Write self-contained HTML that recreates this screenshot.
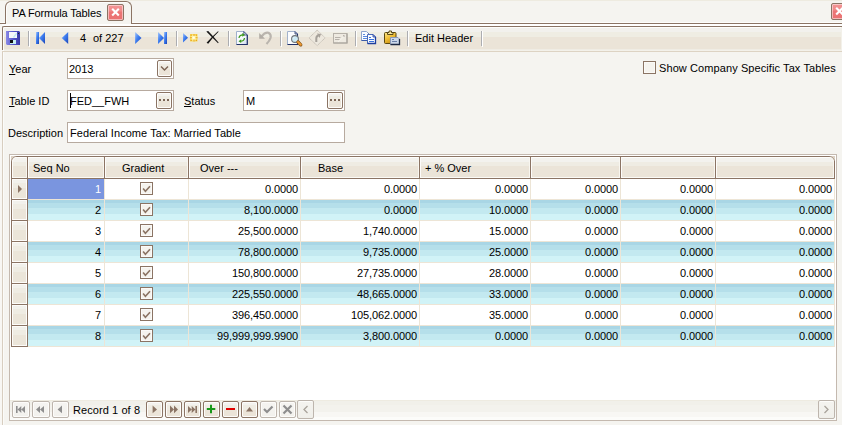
<!DOCTYPE html>
<html><head><meta charset="utf-8">
<style>
*{margin:0;padding:0;box-sizing:border-box}
html,body{width:842px;height:425px;overflow:hidden;background:#f5f4f0;font-family:"Liberation Sans",sans-serif;font-size:11px;color:#000}
.a{position:absolute}
.t{position:absolute;white-space:nowrap;line-height:13px}
svg.a{overflow:visible}
u{text-decoration:underline;text-underline-offset:1px}
</style></head><body>
<div class="a" style="left:0px;top:0px;width:842px;height:1px;background:#eeebe0"></div>
<div class="a" style="left:0px;top:22px;width:842px;height:1px;background:#fdfdfb"></div>
<div class="a" style="left:0px;top:23px;width:842px;height:1px;background:#8b7464"></div>
<div class="a" style="left:0px;top:24px;width:842px;height:2px;background:#fff"></div>
<div class="a" style="left:5px;top:1px;width:127px;height:23px;border:1px solid #8b7464;border-bottom:none;border-radius:6px 6px 0 0;background:#f5f4f0;box-shadow:inset 1px 1px 0 #fdfdfb"></div>
<div class="a" style="left:6px;top:22px;width:125px;height:2px;background:#f5f4f0"></div>
<div class="t" style="left:12px;top:7px;letter-spacing:-0.12px">PA Formula Tables</div>
<div class="a" style="left:107px;top:4px;width:17px;height:17px;border:1px solid #8b7464;border-radius:2px;background:linear-gradient(#f39494 0,#f08a8a 6px,#ec7676 7px,#eb7272);box-shadow:inset 0 0 0 1px rgba(255,240,240,0.55)"></div>
<svg class="a" style="left:107px;top:4px" width="17" height="17" viewBox="0 0 17 17"><path d="M5.2 4.8 L11.8 11.4 M11.8 4.8 L5.2 11.4" stroke="#fff" stroke-width="2.1"/></svg>
<div class="a" style="left:831px;top:3px;width:17px;height:17px;border:1px solid #8b7464;border-radius:2px;background:linear-gradient(#f39494 0,#f08a8a 6px,#ec7676 7px,#eb7272);box-shadow:inset 0 0 0 1px rgba(255,240,240,0.55)"></div>
<svg class="a" style="left:831px;top:3px" width="17" height="17" viewBox="0 0 17 17"><path d="M5.2 4.8 L11.8 11.4 M11.8 4.8 L5.2 11.4" stroke="#fff" stroke-width="2.1"/></svg>
<div class="a" style="left:2px;top:26px;width:840px;height:25px;border-top:1px solid #8b7464;border-left:1px solid #8b7464;border-top-left-radius:2px;background:linear-gradient(#fdfdfb 0,#fdfdfb 1px,#f2f1ed 1px,#f2f1ed 5px,#efede3 5px,#efede3 10px,#ebe4d8 10px,#ebe4d8 22px,#efece4 22px,#efece4 23px,#f3f1ea 23px);box-shadow:inset 1px 0 0 #fdfdfb"></div>
<div class="a" style="left:2px;top:50px;width:1px;height:1px;background:#f6f5f1"></div>
<div class="a" style="left:841px;top:27px;width:1px;height:24px;background:#f3f1ea"></div>
<div class="a" style="left:2px;top:51px;width:840px;height:1px;background:#ddd3c3"></div>
<div class="a" style="left:28px;top:31px;width:1px;height:15px;background:#acadb1"></div>
<div class="a" style="left:29px;top:31px;width:1px;height:16px;background:#fff"></div>
<div class="a" style="left:176px;top:31px;width:1px;height:15px;background:#acadb1"></div>
<div class="a" style="left:177px;top:31px;width:1px;height:16px;background:#fff"></div>
<div class="a" style="left:228px;top:31px;width:1px;height:15px;background:#acadb1"></div>
<div class="a" style="left:229px;top:31px;width:1px;height:16px;background:#fff"></div>
<div class="a" style="left:280px;top:31px;width:1px;height:15px;background:#acadb1"></div>
<div class="a" style="left:281px;top:31px;width:1px;height:16px;background:#fff"></div>
<div class="a" style="left:355px;top:31px;width:1px;height:15px;background:#acadb1"></div>
<div class="a" style="left:356px;top:31px;width:1px;height:16px;background:#fff"></div>
<div class="a" style="left:407px;top:31px;width:1px;height:15px;background:#acadb1"></div>
<div class="a" style="left:408px;top:31px;width:1px;height:16px;background:#fff"></div>
<div class="a" style="left:481px;top:31px;width:1px;height:15px;background:#acadb1"></div>
<div class="a" style="left:482px;top:31px;width:1px;height:16px;background:#fff"></div>
<svg class="a" style="left:6px;top:31px" width="14" height="14" viewBox="0 0 14 14"><defs><linearGradient id="fl" x1="0" y1="0" x2="1" y2="0"><stop offset="0" stop-color="#8a8ae6"/><stop offset="0.5" stop-color="#5656cc"/><stop offset="1" stop-color="#3a3aa8"/></linearGradient></defs><path d="M0 0 H13 L14 1 V14 H1 L0 13 Z" fill="url(#fl)"/><rect x="3" y="1" width="8" height="6" fill="#f4f6fa"/><path d="M7 6 L10 2 L11 2 L11 3 L8 7 Z" fill="#bfe8f0"/><rect x="4" y="9" width="6" height="4" fill="#c8eef2"/><rect x="4" y="9" width="3" height="3" fill="#111"/><rect x="12" y="2" width="1" height="1" fill="#222"/></svg>
<svg class="a" style="left:36px;top:32px" width="10" height="12" viewBox="0 0 10 12"><defs><linearGradient id="bg1" x1="0" y1="0" x2="1" y2="1"><stop offset="0" stop-color="#a8c8fa"/><stop offset="0.45" stop-color="#3f7ff0"/><stop offset="1" stop-color="#1a44b8"/></linearGradient></defs><rect x="0" y="0" width="3" height="12" fill="url(#bg1)"/><path d="M9 0 V12 L3 6 Z" fill="url(#bg1)"/></svg>
<svg class="a" style="left:61px;top:32px" width="8" height="12" viewBox="0 0 8 12"><defs><linearGradient id="bg2" x1="0" y1="0" x2="1" y2="1"><stop offset="0" stop-color="#a8c8fa"/><stop offset="0.45" stop-color="#3f7ff0"/><stop offset="1" stop-color="#1a44b8"/></linearGradient></defs><path d="M7.2 0 V12 L0.7 6 Z" fill="url(#bg2)"/></svg>
<div class="t" style="left:80px;top:32px;">4</div>
<div class="t" style="left:93px;top:32px;">of 227</div>
<svg class="a" style="left:135px;top:32px" width="7" height="12" viewBox="0 0 7 12"><defs><linearGradient id="bg3" x1="0" y1="0" x2="1" y2="1"><stop offset="0" stop-color="#a8c8fa"/><stop offset="0.45" stop-color="#3f7ff0"/><stop offset="1" stop-color="#1a44b8"/></linearGradient></defs><path d="M0.1 0 V12 L6.5 6 Z" fill="url(#bg3)"/></svg>
<svg class="a" style="left:158px;top:32px" width="10" height="12" viewBox="0 0 10 12"><defs><linearGradient id="bg4" x1="0" y1="0" x2="1" y2="1"><stop offset="0" stop-color="#a8c8fa"/><stop offset="0.45" stop-color="#3f7ff0"/><stop offset="1" stop-color="#1a44b8"/></linearGradient></defs><path d="M0 0 V12 L6 6 Z" fill="url(#bg4)"/><rect x="6" y="0" width="3" height="12" fill="url(#bg4)"/></svg>
<svg class="a" style="left:183px;top:33px" width="15" height="10" viewBox="0 0 15 10"><defs><linearGradient id="bg5" x1="0" y1="0" x2="1" y2="1"><stop offset="0" stop-color="#a8c8fa"/><stop offset="0.45" stop-color="#3f7ff0"/><stop offset="1" stop-color="#1a44b8"/></linearGradient></defs><path d="M0 0 V9.5 L5 4.75 Z" fill="url(#bg5)"/><defs><radialGradient id="sb"><stop offset="0" stop-color="#fff"/><stop offset="0.45" stop-color="#fdf6b0"/><stop offset="1" stop-color="#f8dc5a"/></radialGradient></defs><rect x="7" y="1" width="7.5" height="7.5" fill="url(#sb)"/><path d="M10.5 1h1v2h-1zM10.5 6.5h1v2h-1zM7 4.3h2v1h-2zM12.5 4.3h2v1h-2zM7.5 1.5h1.3v1.3h-1.3zM12.7 1.5h1.3v1.3h-1.3zM7.5 6.7h1.3v1.3h-1.3zM12.7 6.7h1.3v1.3h-1.3z" fill="#eaa21e"/></svg>
<svg class="a" style="left:206px;top:31px" width="13" height="13" viewBox="0 0 13 13"><path d="M0.3 0.6 L2.2 0 Q7 5 12.6 11.6 L12 12.3 Q6 6.5 0.3 0.6 Z" fill="#151515"/><path d="M12.6 0.8 L12 0.2 Q6 5.5 0.6 11.8 L2.2 12.8 Q7 6 12.6 0.8 Z" fill="#151515"/></svg>
<svg class="a" style="left:236px;top:31px" width="12" height="14" viewBox="0 0 12 14"><defs><linearGradient id="rd" x1="0" y1="0" x2="1" y2="1"><stop offset="0" stop-color="#ffffff"/><stop offset="0.6" stop-color="#f2f6fc"/><stop offset="1" stop-color="#c9d6ea"/></linearGradient></defs><path d="M0.5 0.5 H7.8 L11.3 4 V13.5 H0.5 Z" fill="url(#rd)" stroke="#9fb0cc"/><path d="M11.3 4 V13.5 H0.5" fill="none" stroke="#22326a" stroke-width="1.2"/><path d="M7.8 0.5 L11.3 4 H7.8 Z" fill="#dfe6f2" stroke="#2a3a70" stroke-width="0.8"/><path d="M3 7 Q3.2 4 7 3.8" stroke="#3d9a1e" stroke-width="1.25" fill="none"/><path d="M6.3 2 L9 3.9 L6.3 5.8 Z" fill="#3d9a1e"/><path d="M8.5 7 Q8.3 10 4.5 10.2" stroke="#3d9a1e" stroke-width="1.25" fill="none"/><path d="M5.2 8.3 L2.5 10.2 L5.2 12.1 Z" fill="#3d9a1e"/></svg>
<svg class="a" style="left:259px;top:31px" width="14" height="14" viewBox="0 0 14 14"><path d="M2.5 5.5 Q6 1 9.5 1.8 Q12.5 3.5 11.5 7 Q10.5 10 7.5 13" stroke="#bab5ae" stroke-width="2.2" fill="none"/><path d="M0.2 2 V7.8 H6 Z" fill="#b2ada6"/></svg>
<svg class="a" style="left:287px;top:31px" width="16" height="15" viewBox="0 0 16 15"><defs><linearGradient id="mg" x1="0" y1="0" x2="1" y2="1"><stop offset="0" stop-color="#f4fbff"/><stop offset="0.5" stop-color="#c8e8f4"/><stop offset="1" stop-color="#eef8fc"/></linearGradient></defs><path d="M0.5 0.5 H8 L10.5 3 V13.5 H0.5 Z" fill="#fbfcfe" stroke="#a2b2cc"/><path d="M10.5 3 V13.5 H0.5" fill="none" stroke="#22326a" stroke-width="1.1"/><path d="M8 0.5 L10.5 3 H8 Z" fill="#dfe6f2" stroke="#2a3a70" stroke-width="0.8"/><circle cx="8" cy="8" r="3.4" fill="url(#mg)" stroke="#6e747a" stroke-width="1.1"/><path d="M11 11 L13.8 13.8" stroke="#7a4a10" stroke-width="3.2" stroke-linecap="round"/><path d="M11 11 L13.8 13.8" stroke="#ee9a34" stroke-width="2" stroke-linecap="round"/></svg>
<svg class="a" style="left:308px;top:29px" width="19" height="19" viewBox="0 0 19 19"><path d="M9.2 1.1 L17.1 8.9 L9.2 16.6 L1 8.9 Z" fill="#ede8de" stroke="#c2bcb3" stroke-dasharray="1.2 0.6"/><path d="M8.3 13 V9.5 Q8.3 7 10.5 6.5" stroke="#a6a19a" stroke-width="2" fill="none"/><path d="M9 4.5 L13 5 L11.5 9 Z" fill="#a6a19a"/></svg>
<svg class="a" style="left:333px;top:33px" width="15" height="11" viewBox="0 0 15 11"><rect x="0.5" y="0.5" width="13.5" height="9.5" fill="#eeeae1" stroke="#b6b1a9"/><path d="M14 0.5 V10 H0.5" fill="none" stroke="#a8a39c" stroke-width="1.2"/><path d="M2 4.5 H7.5 M2 6.5 H6.5" stroke="#b0aca5" stroke-width="0.9"/><rect x="10" y="2" width="2" height="2" fill="#b8b2aa"/><path d="M5 9 L12 2.5" stroke="#f8f6f0" stroke-width="0.8"/></svg>
<svg class="a" style="left:361px;top:31px" width="16" height="14" viewBox="0 0 16 14"><path d="M0.5 0.5 H5.5 L7.5 2.5 V9.5 H0.5 Z" fill="#f8fbff" stroke="#8ea4cc"/><path d="M7.5 2.5 V9.5 H0.5" fill="none" stroke="#3a5aa8"/><path d="M2 3.5 H4 M2 5.5 H6 M2 7.5 H6" stroke="#5a8ae0" stroke-width="1"/><path d="M6.5 3.5 H12 L14.5 6 V12.5 H6.5 Z" fill="#f8fbff" stroke="#4a6ab8"/><path d="M14.5 6 V12.5 H6.5" fill="none" stroke="#1e3e9e" stroke-width="1.3"/><path d="M12 3.5 L14.5 6 H12 Z" fill="#c0d0ee" stroke="#1e3e9e" stroke-width="0.8"/><path d="M8 6.5 H10 M8 8.5 H13 M8 10.5 H13" stroke="#3a72dc" stroke-width="1"/></svg>
<svg class="a" style="left:384px;top:30px" width="17" height="16" viewBox="0 0 17 16"><defs><linearGradient id="gd" x1="0" y1="0" x2="0.6" y2="1"><stop offset="0" stop-color="#fbe68c"/><stop offset="0.5" stop-color="#f0c03a"/><stop offset="1" stop-color="#c88e10"/></linearGradient></defs><rect x="0.5" y="2.5" width="11.5" height="11" rx="1" fill="url(#gd)" stroke="#5a4812"/><path d="M3.5 4.5 V2.5 H5 V1 H7.5 V2.5 H9 V4.5 Z" fill="#f4e49a" stroke="#4a3a10" stroke-width="0.9"/><path d="M6.5 7.5 H14 L15.5 9 V14.5 H6.5 Z" fill="#ccd8ea" stroke="#8898b8"/><path d="M15.5 9 V14.5 H6.5" fill="none" stroke="#1e2a44" stroke-width="1.3"/><path d="M8 9.5 H10 M8 11.5 H13" stroke="#6a80a8" stroke-width="1"/></svg>
<div class="t" style="left:415px;top:32px;">Edit Header</div>
<div class="a" style="left:0px;top:24px;width:2px;height:401px;background:#f8f7f4"></div>
<div class="a" style="left:2px;top:52px;width:1px;height:373px;background:#d8cec0"></div>
<div class="a" style="left:3px;top:52px;width:1px;height:373px;background:#fbfbf9"></div>
<div class="t" style="left:9px;top:63px;"><u>Y</u>ear</div>
<div class="a" style="left:67px;top:58px;width:107px;height:21px;border:1px solid #b7aa9f;background:#fff"></div>
<div class="t" style="left:69px;top:63px;">2013</div>
<div class="a" style="left:157px;top:60px;width:15px;height:17px;border:1px solid #8b7464;border-radius:2px;background:linear-gradient(#f3f2ee 0,#f3f2ee 3px,#efece3 3px,#efece3 8px,#ebe4d8 8px);box-shadow:inset 0 0 0 1px #fdfcfa"></div>
<svg class="a" style="left:157px;top:60px" width="15" height="17" viewBox="0 0 15 17"><path d="M4 6.5 L7.5 10 L11 6.5" stroke="#7d6656" stroke-width="1.5" fill="none"/></svg>
<div class="t" style="left:9px;top:95px;"><u>T</u>able ID</div>
<div class="a" style="left:67px;top:90px;width:107px;height:21px;border:1px solid #b7aa9f;background:#fff"></div>
<div class="t" style="left:70px;top:95px;">FED__FWH</div>
<div class="a" style="left:70px;top:93px;width:1px;height:15px;background:#000"></div>
<div class="a" style="left:156px;top:92px;width:16px;height:17px;border:1px solid #8b7464;border-radius:2px;background:linear-gradient(#f3f2ee 0,#f3f2ee 3px,#efece3 3px,#efece3 8px,#ebe4d8 8px);box-shadow:inset 0 0 0 1px #fdfcfa"></div>
<svg class="a" style="left:156px;top:92px" width="16" height="17" viewBox="0 0 16 17"><rect x="3" y="7" width="2" height="2" fill="#7d6656"/><rect x="7" y="7" width="2" height="2" fill="#7d6656"/><rect x="11" y="7" width="2" height="2" fill="#7d6656"/></svg>
<div class="t" style="left:184px;top:95px;"><u>S</u>tatus</div>
<div class="a" style="left:243px;top:90px;width:102px;height:21px;border:1px solid #b7aa9f;background:#fff"></div>
<div class="t" style="left:246px;top:95px;">M</div>
<div class="a" style="left:327px;top:92px;width:16px;height:17px;border:1px solid #8b7464;border-radius:2px;background:linear-gradient(#f3f2ee 0,#f3f2ee 3px,#efece3 3px,#efece3 8px,#ebe4d8 8px);box-shadow:inset 0 0 0 1px #fdfcfa"></div>
<svg class="a" style="left:327px;top:92px" width="16" height="17" viewBox="0 0 16 17"><rect x="3" y="7" width="2" height="2" fill="#7d6656"/><rect x="7" y="7" width="2" height="2" fill="#7d6656"/><rect x="11" y="7" width="2" height="2" fill="#7d6656"/></svg>
<div class="t" style="left:8px;top:127px;">Description</div>
<div class="a" style="left:67px;top:122px;width:278px;height:21px;border:1px solid #b7aa9f;background:#fff"></div>
<div class="t" style="left:70px;top:127px;letter-spacing:0.06px">Federal Income Tax: Married Table</div>
<div class="a" style="left:643px;top:61px;width:13px;height:13px;border:1px solid #8b7464;background:#f5f3ee;box-shadow:inset 0 0 0 1px #fbfaf7"></div>
<div class="t" style="left:659px;top:62px;letter-spacing:0.09px">Show Company Specific Tax Tables</div>
<div class="a" style="left:9px;top:154px;width:828px;height:267px;border:1px solid #c4b9af;background:#fff"></div>
<div class="a" style="left:11px;top:156px;width:4px;height:4px;background:radial-gradient(circle at 6px 6px,transparent 5px,#ddd2c4 6px)"></div>
<div class="a" style="left:831px;top:156px;width:4px;height:4px;background:radial-gradient(circle at -2px 6px,transparent 5px,#ddd2c4 6px)"></div>
<div class="a" style="left:11px;top:156px;width:824px;height:23px;border:1px solid #8b7464;border-radius:6px 6px 0 0;background:#ebe5d9;overflow:hidden"></div>
<div class="a" style="left:12px;top:157px;width:15px;height:21px;background:linear-gradient(#fdfdfb 0,#fdfdfb 1px,#f3f2ee 1px,#f3f2ee 5px,#efece3 5px,#efece3 9px,#ebe4d8 9px,#ebe4d8 20px,#fbfaf6 20px);box-shadow:inset 1px 0 0 #fdfcfa,inset -1px 0 0 #f8f6f0;border-top-left-radius:5px;"></div>
<div class="a" style="left:27px;top:157px;width:1px;height:22px;background:#8b7464"></div>
<div class="a" style="left:28px;top:157px;width:76px;height:21px;background:linear-gradient(#fdfdfb 0,#fdfdfb 1px,#f3f2ee 1px,#f3f2ee 5px,#efece3 5px,#efece3 9px,#ebe4d8 9px,#ebe4d8 20px,#fbfaf6 20px);box-shadow:inset 1px 0 0 #fdfcfa,inset -1px 0 0 #f8f6f0;"></div>
<div class="a" style="left:104px;top:157px;width:1px;height:22px;background:#8b7464"></div>
<div class="a" style="left:105px;top:157px;width:83px;height:21px;background:linear-gradient(#fdfdfb 0,#fdfdfb 1px,#f3f2ee 1px,#f3f2ee 5px,#efece3 5px,#efece3 9px,#ebe4d8 9px,#ebe4d8 20px,#fbfaf6 20px);box-shadow:inset 1px 0 0 #fdfcfa,inset -1px 0 0 #f8f6f0;"></div>
<div class="a" style="left:188px;top:157px;width:1px;height:22px;background:#8b7464"></div>
<div class="a" style="left:189px;top:157px;width:111px;height:21px;background:linear-gradient(#fdfdfb 0,#fdfdfb 1px,#f3f2ee 1px,#f3f2ee 5px,#efece3 5px,#efece3 9px,#ebe4d8 9px,#ebe4d8 20px,#fbfaf6 20px);box-shadow:inset 1px 0 0 #fdfcfa,inset -1px 0 0 #f8f6f0;"></div>
<div class="a" style="left:300px;top:157px;width:1px;height:22px;background:#8b7464"></div>
<div class="a" style="left:301px;top:157px;width:118px;height:21px;background:linear-gradient(#fdfdfb 0,#fdfdfb 1px,#f3f2ee 1px,#f3f2ee 5px,#efece3 5px,#efece3 9px,#ebe4d8 9px,#ebe4d8 20px,#fbfaf6 20px);box-shadow:inset 1px 0 0 #fdfcfa,inset -1px 0 0 #f8f6f0;"></div>
<div class="a" style="left:419px;top:157px;width:1px;height:22px;background:#8b7464"></div>
<div class="a" style="left:420px;top:157px;width:110px;height:21px;background:linear-gradient(#fdfdfb 0,#fdfdfb 1px,#f3f2ee 1px,#f3f2ee 5px,#efece3 5px,#efece3 9px,#ebe4d8 9px,#ebe4d8 20px,#fbfaf6 20px);box-shadow:inset 1px 0 0 #fdfcfa,inset -1px 0 0 #f8f6f0;"></div>
<div class="a" style="left:530px;top:157px;width:1px;height:22px;background:#8b7464"></div>
<div class="a" style="left:531px;top:157px;width:89px;height:21px;background:linear-gradient(#fdfdfb 0,#fdfdfb 1px,#f3f2ee 1px,#f3f2ee 5px,#efece3 5px,#efece3 9px,#ebe4d8 9px,#ebe4d8 20px,#fbfaf6 20px);box-shadow:inset 1px 0 0 #fdfcfa,inset -1px 0 0 #f8f6f0;"></div>
<div class="a" style="left:620px;top:157px;width:1px;height:22px;background:#8b7464"></div>
<div class="a" style="left:621px;top:157px;width:94px;height:21px;background:linear-gradient(#fdfdfb 0,#fdfdfb 1px,#f3f2ee 1px,#f3f2ee 5px,#efece3 5px,#efece3 9px,#ebe4d8 9px,#ebe4d8 20px,#fbfaf6 20px);box-shadow:inset 1px 0 0 #fdfcfa,inset -1px 0 0 #f8f6f0;"></div>
<div class="a" style="left:715px;top:157px;width:1px;height:22px;background:#8b7464"></div>
<div class="a" style="left:716px;top:157px;width:118px;height:21px;background:linear-gradient(#fdfdfb 0,#fdfdfb 1px,#f3f2ee 1px,#f3f2ee 5px,#efece3 5px,#efece3 9px,#ebe4d8 9px,#ebe4d8 20px,#fbfaf6 20px);box-shadow:inset 1px 0 0 #fdfcfa,inset -1px 0 0 #f8f6f0;border-top-right-radius:5px;"></div>
<div class="t" style="left:33px;top:162px;">Seq No</div>
<div class="t" style="left:122px;top:162px;">Gradient</div>
<div class="t" style="left:200px;top:162px;">Over ---</div>
<div class="t" style="left:318px;top:162px;">Base</div>
<div class="t" style="left:425px;top:162px;">+ % Over</div>
<div class="a" style="left:11px;top:178px;width:17px;height:169px;background:#8b7464"></div>
<div class="a" style="left:28px;top:179px;width:806px;height:20px;background:#fff"></div>
<div class="a" style="left:28px;top:199px;width:806px;height:1px;background:#ede5d6"></div>
<div class="a" style="left:12px;top:179px;width:15px;height:20px;background:linear-gradient(#fdfcfa 0,#fdfcfa 1px,#f2f1ec 1px,#f2f1ec 4px,#efece3 4px,#efece3 9px,#ebe5d9 9px,#ebe5d9 19px,#fdfcfa 19px);box-shadow:inset 1px 0 0 #fdfcfa,inset -1px 0 0 #fdfcfa"></div>
<div class="a" style="left:104px;top:179px;width:1px;height:21px;background:#ede5d6"></div>
<div class="a" style="left:188px;top:179px;width:1px;height:21px;background:#ede5d6"></div>
<div class="a" style="left:300px;top:179px;width:1px;height:21px;background:#ede5d6"></div>
<div class="a" style="left:419px;top:179px;width:1px;height:21px;background:#ede5d6"></div>
<div class="a" style="left:530px;top:179px;width:1px;height:21px;background:#ede5d6"></div>
<div class="a" style="left:620px;top:179px;width:1px;height:21px;background:#ede5d6"></div>
<div class="a" style="left:715px;top:179px;width:1px;height:21px;background:#ede5d6"></div>
<div class="a" style="left:834px;top:179px;width:1px;height:21px;background:#ede5d6"></div>
<div class="a" style="left:28px;top:179px;width:76px;height:20px;background:#7a95df"></div>
<svg class="a" style="left:17px;top:185px" width="6" height="8" viewBox="0 0 6 8"><path d="M1 0 L5 4 L1 8 Z" fill="#8b7464"/></svg>
<div class="t" style="left:28px;top:183px;width:73px;text-align:right;color:#fff">1</div>
<div class="a" style="left:140px;top:182px;width:13px;height:13px;border:1px solid #8b7464;background:#f5f3ee;box-shadow:inset 0 0 0 1px #fbfaf8"></div>
<svg class="a" style="left:140px;top:182px" width="13" height="13" viewBox="0 0 13 13"><path d="M3.1 6.5 L5.4 9.2 L10 4.2" stroke="#8b7464" stroke-width="1.6" fill="none"/></svg>
<div class="t" style="left:180px;top:183px;width:118px;text-align:right;letter-spacing:-0.1px">0.0000</div>
<div class="t" style="left:299px;top:183px;width:118px;text-align:right;letter-spacing:-0.1px">0.0000</div>
<div class="t" style="left:410px;top:183px;width:118px;text-align:right;letter-spacing:-0.1px">0.0000</div>
<div class="t" style="left:500px;top:183px;width:118px;text-align:right;letter-spacing:-0.1px">0.0000</div>
<div class="t" style="left:595px;top:183px;width:118px;text-align:right;letter-spacing:-0.1px">0.0000</div>
<div class="t" style="left:714px;top:183px;width:118px;text-align:right;letter-spacing:-0.1px">0.0000</div>
<div class="a" style="left:28px;top:200px;width:806px;height:20px;background:linear-gradient(#a9d6e5 0,#a9d6e5 3px,#b5dfea 3px,#b5dfea 8px,#c3e9f0 8px,#c3e9f0 14px,#d1f3f7 14px)"></div>
<div class="a" style="left:28px;top:220px;width:806px;height:1px;background:#ede5d6"></div>
<div class="a" style="left:12px;top:200px;width:15px;height:20px;background:linear-gradient(#fdfcfa 0,#fdfcfa 1px,#f2f1ec 1px,#f2f1ec 4px,#efece3 4px,#efece3 9px,#ebe5d9 9px,#ebe5d9 19px,#fdfcfa 19px);box-shadow:inset 1px 0 0 #fdfcfa,inset -1px 0 0 #fdfcfa"></div>
<div class="a" style="left:104px;top:200px;width:1px;height:21px;background:#ede5d6"></div>
<div class="a" style="left:188px;top:200px;width:1px;height:21px;background:#ede5d6"></div>
<div class="a" style="left:300px;top:200px;width:1px;height:21px;background:#ede5d6"></div>
<div class="a" style="left:419px;top:200px;width:1px;height:21px;background:#ede5d6"></div>
<div class="a" style="left:530px;top:200px;width:1px;height:21px;background:#ede5d6"></div>
<div class="a" style="left:620px;top:200px;width:1px;height:21px;background:#ede5d6"></div>
<div class="a" style="left:715px;top:200px;width:1px;height:21px;background:#ede5d6"></div>
<div class="a" style="left:834px;top:200px;width:1px;height:21px;background:#ede5d6"></div>
<div class="t" style="left:28px;top:204px;width:73px;text-align:right;color:#000">2</div>
<div class="a" style="left:140px;top:203px;width:13px;height:13px;border:1px solid #8b7464;background:#f5f3ee;box-shadow:inset 0 0 0 1px #fbfaf8"></div>
<svg class="a" style="left:140px;top:203px" width="13" height="13" viewBox="0 0 13 13"><path d="M3.1 6.5 L5.4 9.2 L10 4.2" stroke="#8b7464" stroke-width="1.6" fill="none"/></svg>
<div class="t" style="left:180px;top:204px;width:118px;text-align:right;letter-spacing:-0.1px">8,100.0000</div>
<div class="t" style="left:299px;top:204px;width:118px;text-align:right;letter-spacing:-0.1px">0.0000</div>
<div class="t" style="left:410px;top:204px;width:118px;text-align:right;letter-spacing:-0.1px">10.0000</div>
<div class="t" style="left:500px;top:204px;width:118px;text-align:right;letter-spacing:-0.1px">0.0000</div>
<div class="t" style="left:595px;top:204px;width:118px;text-align:right;letter-spacing:-0.1px">0.0000</div>
<div class="t" style="left:714px;top:204px;width:118px;text-align:right;letter-spacing:-0.1px">0.0000</div>
<div class="a" style="left:28px;top:221px;width:806px;height:20px;background:#fff"></div>
<div class="a" style="left:28px;top:241px;width:806px;height:1px;background:#ede5d6"></div>
<div class="a" style="left:12px;top:221px;width:15px;height:20px;background:linear-gradient(#fdfcfa 0,#fdfcfa 1px,#f2f1ec 1px,#f2f1ec 4px,#efece3 4px,#efece3 9px,#ebe5d9 9px,#ebe5d9 19px,#fdfcfa 19px);box-shadow:inset 1px 0 0 #fdfcfa,inset -1px 0 0 #fdfcfa"></div>
<div class="a" style="left:104px;top:221px;width:1px;height:21px;background:#ede5d6"></div>
<div class="a" style="left:188px;top:221px;width:1px;height:21px;background:#ede5d6"></div>
<div class="a" style="left:300px;top:221px;width:1px;height:21px;background:#ede5d6"></div>
<div class="a" style="left:419px;top:221px;width:1px;height:21px;background:#ede5d6"></div>
<div class="a" style="left:530px;top:221px;width:1px;height:21px;background:#ede5d6"></div>
<div class="a" style="left:620px;top:221px;width:1px;height:21px;background:#ede5d6"></div>
<div class="a" style="left:715px;top:221px;width:1px;height:21px;background:#ede5d6"></div>
<div class="a" style="left:834px;top:221px;width:1px;height:21px;background:#ede5d6"></div>
<div class="t" style="left:28px;top:225px;width:73px;text-align:right;color:#000">3</div>
<div class="a" style="left:140px;top:224px;width:13px;height:13px;border:1px solid #8b7464;background:#f5f3ee;box-shadow:inset 0 0 0 1px #fbfaf8"></div>
<svg class="a" style="left:140px;top:224px" width="13" height="13" viewBox="0 0 13 13"><path d="M3.1 6.5 L5.4 9.2 L10 4.2" stroke="#8b7464" stroke-width="1.6" fill="none"/></svg>
<div class="t" style="left:180px;top:225px;width:118px;text-align:right;letter-spacing:-0.1px">25,500.0000</div>
<div class="t" style="left:299px;top:225px;width:118px;text-align:right;letter-spacing:-0.1px">1,740.0000</div>
<div class="t" style="left:410px;top:225px;width:118px;text-align:right;letter-spacing:-0.1px">15.0000</div>
<div class="t" style="left:500px;top:225px;width:118px;text-align:right;letter-spacing:-0.1px">0.0000</div>
<div class="t" style="left:595px;top:225px;width:118px;text-align:right;letter-spacing:-0.1px">0.0000</div>
<div class="t" style="left:714px;top:225px;width:118px;text-align:right;letter-spacing:-0.1px">0.0000</div>
<div class="a" style="left:28px;top:242px;width:806px;height:20px;background:linear-gradient(#a9d6e5 0,#a9d6e5 3px,#b5dfea 3px,#b5dfea 8px,#c3e9f0 8px,#c3e9f0 14px,#d1f3f7 14px)"></div>
<div class="a" style="left:28px;top:262px;width:806px;height:1px;background:#ede5d6"></div>
<div class="a" style="left:12px;top:242px;width:15px;height:20px;background:linear-gradient(#fdfcfa 0,#fdfcfa 1px,#f2f1ec 1px,#f2f1ec 4px,#efece3 4px,#efece3 9px,#ebe5d9 9px,#ebe5d9 19px,#fdfcfa 19px);box-shadow:inset 1px 0 0 #fdfcfa,inset -1px 0 0 #fdfcfa"></div>
<div class="a" style="left:104px;top:242px;width:1px;height:21px;background:#ede5d6"></div>
<div class="a" style="left:188px;top:242px;width:1px;height:21px;background:#ede5d6"></div>
<div class="a" style="left:300px;top:242px;width:1px;height:21px;background:#ede5d6"></div>
<div class="a" style="left:419px;top:242px;width:1px;height:21px;background:#ede5d6"></div>
<div class="a" style="left:530px;top:242px;width:1px;height:21px;background:#ede5d6"></div>
<div class="a" style="left:620px;top:242px;width:1px;height:21px;background:#ede5d6"></div>
<div class="a" style="left:715px;top:242px;width:1px;height:21px;background:#ede5d6"></div>
<div class="a" style="left:834px;top:242px;width:1px;height:21px;background:#ede5d6"></div>
<div class="t" style="left:28px;top:246px;width:73px;text-align:right;color:#000">4</div>
<div class="a" style="left:140px;top:245px;width:13px;height:13px;border:1px solid #8b7464;background:#f5f3ee;box-shadow:inset 0 0 0 1px #fbfaf8"></div>
<svg class="a" style="left:140px;top:245px" width="13" height="13" viewBox="0 0 13 13"><path d="M3.1 6.5 L5.4 9.2 L10 4.2" stroke="#8b7464" stroke-width="1.6" fill="none"/></svg>
<div class="t" style="left:180px;top:246px;width:118px;text-align:right;letter-spacing:-0.1px">78,800.0000</div>
<div class="t" style="left:299px;top:246px;width:118px;text-align:right;letter-spacing:-0.1px">9,735.0000</div>
<div class="t" style="left:410px;top:246px;width:118px;text-align:right;letter-spacing:-0.1px">25.0000</div>
<div class="t" style="left:500px;top:246px;width:118px;text-align:right;letter-spacing:-0.1px">0.0000</div>
<div class="t" style="left:595px;top:246px;width:118px;text-align:right;letter-spacing:-0.1px">0.0000</div>
<div class="t" style="left:714px;top:246px;width:118px;text-align:right;letter-spacing:-0.1px">0.0000</div>
<div class="a" style="left:28px;top:263px;width:806px;height:20px;background:#fff"></div>
<div class="a" style="left:28px;top:283px;width:806px;height:1px;background:#ede5d6"></div>
<div class="a" style="left:12px;top:263px;width:15px;height:20px;background:linear-gradient(#fdfcfa 0,#fdfcfa 1px,#f2f1ec 1px,#f2f1ec 4px,#efece3 4px,#efece3 9px,#ebe5d9 9px,#ebe5d9 19px,#fdfcfa 19px);box-shadow:inset 1px 0 0 #fdfcfa,inset -1px 0 0 #fdfcfa"></div>
<div class="a" style="left:104px;top:263px;width:1px;height:21px;background:#ede5d6"></div>
<div class="a" style="left:188px;top:263px;width:1px;height:21px;background:#ede5d6"></div>
<div class="a" style="left:300px;top:263px;width:1px;height:21px;background:#ede5d6"></div>
<div class="a" style="left:419px;top:263px;width:1px;height:21px;background:#ede5d6"></div>
<div class="a" style="left:530px;top:263px;width:1px;height:21px;background:#ede5d6"></div>
<div class="a" style="left:620px;top:263px;width:1px;height:21px;background:#ede5d6"></div>
<div class="a" style="left:715px;top:263px;width:1px;height:21px;background:#ede5d6"></div>
<div class="a" style="left:834px;top:263px;width:1px;height:21px;background:#ede5d6"></div>
<div class="t" style="left:28px;top:267px;width:73px;text-align:right;color:#000">5</div>
<div class="a" style="left:140px;top:266px;width:13px;height:13px;border:1px solid #8b7464;background:#f5f3ee;box-shadow:inset 0 0 0 1px #fbfaf8"></div>
<svg class="a" style="left:140px;top:266px" width="13" height="13" viewBox="0 0 13 13"><path d="M3.1 6.5 L5.4 9.2 L10 4.2" stroke="#8b7464" stroke-width="1.6" fill="none"/></svg>
<div class="t" style="left:180px;top:267px;width:118px;text-align:right;letter-spacing:-0.1px">150,800.0000</div>
<div class="t" style="left:299px;top:267px;width:118px;text-align:right;letter-spacing:-0.1px">27,735.0000</div>
<div class="t" style="left:410px;top:267px;width:118px;text-align:right;letter-spacing:-0.1px">28.0000</div>
<div class="t" style="left:500px;top:267px;width:118px;text-align:right;letter-spacing:-0.1px">0.0000</div>
<div class="t" style="left:595px;top:267px;width:118px;text-align:right;letter-spacing:-0.1px">0.0000</div>
<div class="t" style="left:714px;top:267px;width:118px;text-align:right;letter-spacing:-0.1px">0.0000</div>
<div class="a" style="left:28px;top:284px;width:806px;height:20px;background:linear-gradient(#a9d6e5 0,#a9d6e5 3px,#b5dfea 3px,#b5dfea 8px,#c3e9f0 8px,#c3e9f0 14px,#d1f3f7 14px)"></div>
<div class="a" style="left:28px;top:304px;width:806px;height:1px;background:#ede5d6"></div>
<div class="a" style="left:12px;top:284px;width:15px;height:20px;background:linear-gradient(#fdfcfa 0,#fdfcfa 1px,#f2f1ec 1px,#f2f1ec 4px,#efece3 4px,#efece3 9px,#ebe5d9 9px,#ebe5d9 19px,#fdfcfa 19px);box-shadow:inset 1px 0 0 #fdfcfa,inset -1px 0 0 #fdfcfa"></div>
<div class="a" style="left:104px;top:284px;width:1px;height:21px;background:#ede5d6"></div>
<div class="a" style="left:188px;top:284px;width:1px;height:21px;background:#ede5d6"></div>
<div class="a" style="left:300px;top:284px;width:1px;height:21px;background:#ede5d6"></div>
<div class="a" style="left:419px;top:284px;width:1px;height:21px;background:#ede5d6"></div>
<div class="a" style="left:530px;top:284px;width:1px;height:21px;background:#ede5d6"></div>
<div class="a" style="left:620px;top:284px;width:1px;height:21px;background:#ede5d6"></div>
<div class="a" style="left:715px;top:284px;width:1px;height:21px;background:#ede5d6"></div>
<div class="a" style="left:834px;top:284px;width:1px;height:21px;background:#ede5d6"></div>
<div class="t" style="left:28px;top:288px;width:73px;text-align:right;color:#000">6</div>
<div class="a" style="left:140px;top:287px;width:13px;height:13px;border:1px solid #8b7464;background:#f5f3ee;box-shadow:inset 0 0 0 1px #fbfaf8"></div>
<svg class="a" style="left:140px;top:287px" width="13" height="13" viewBox="0 0 13 13"><path d="M3.1 6.5 L5.4 9.2 L10 4.2" stroke="#8b7464" stroke-width="1.6" fill="none"/></svg>
<div class="t" style="left:180px;top:288px;width:118px;text-align:right;letter-spacing:-0.1px">225,550.0000</div>
<div class="t" style="left:299px;top:288px;width:118px;text-align:right;letter-spacing:-0.1px">48,665.0000</div>
<div class="t" style="left:410px;top:288px;width:118px;text-align:right;letter-spacing:-0.1px">33.0000</div>
<div class="t" style="left:500px;top:288px;width:118px;text-align:right;letter-spacing:-0.1px">0.0000</div>
<div class="t" style="left:595px;top:288px;width:118px;text-align:right;letter-spacing:-0.1px">0.0000</div>
<div class="t" style="left:714px;top:288px;width:118px;text-align:right;letter-spacing:-0.1px">0.0000</div>
<div class="a" style="left:28px;top:305px;width:806px;height:20px;background:#fff"></div>
<div class="a" style="left:28px;top:325px;width:806px;height:1px;background:#ede5d6"></div>
<div class="a" style="left:12px;top:305px;width:15px;height:20px;background:linear-gradient(#fdfcfa 0,#fdfcfa 1px,#f2f1ec 1px,#f2f1ec 4px,#efece3 4px,#efece3 9px,#ebe5d9 9px,#ebe5d9 19px,#fdfcfa 19px);box-shadow:inset 1px 0 0 #fdfcfa,inset -1px 0 0 #fdfcfa"></div>
<div class="a" style="left:104px;top:305px;width:1px;height:21px;background:#ede5d6"></div>
<div class="a" style="left:188px;top:305px;width:1px;height:21px;background:#ede5d6"></div>
<div class="a" style="left:300px;top:305px;width:1px;height:21px;background:#ede5d6"></div>
<div class="a" style="left:419px;top:305px;width:1px;height:21px;background:#ede5d6"></div>
<div class="a" style="left:530px;top:305px;width:1px;height:21px;background:#ede5d6"></div>
<div class="a" style="left:620px;top:305px;width:1px;height:21px;background:#ede5d6"></div>
<div class="a" style="left:715px;top:305px;width:1px;height:21px;background:#ede5d6"></div>
<div class="a" style="left:834px;top:305px;width:1px;height:21px;background:#ede5d6"></div>
<div class="t" style="left:28px;top:309px;width:73px;text-align:right;color:#000">7</div>
<div class="a" style="left:140px;top:308px;width:13px;height:13px;border:1px solid #8b7464;background:#f5f3ee;box-shadow:inset 0 0 0 1px #fbfaf8"></div>
<svg class="a" style="left:140px;top:308px" width="13" height="13" viewBox="0 0 13 13"><path d="M3.1 6.5 L5.4 9.2 L10 4.2" stroke="#8b7464" stroke-width="1.6" fill="none"/></svg>
<div class="t" style="left:180px;top:309px;width:118px;text-align:right;letter-spacing:-0.1px">396,450.0000</div>
<div class="t" style="left:299px;top:309px;width:118px;text-align:right;letter-spacing:-0.1px">105,062.0000</div>
<div class="t" style="left:410px;top:309px;width:118px;text-align:right;letter-spacing:-0.1px">35.0000</div>
<div class="t" style="left:500px;top:309px;width:118px;text-align:right;letter-spacing:-0.1px">0.0000</div>
<div class="t" style="left:595px;top:309px;width:118px;text-align:right;letter-spacing:-0.1px">0.0000</div>
<div class="t" style="left:714px;top:309px;width:118px;text-align:right;letter-spacing:-0.1px">0.0000</div>
<div class="a" style="left:28px;top:326px;width:806px;height:20px;background:linear-gradient(#a9d6e5 0,#a9d6e5 3px,#b5dfea 3px,#b5dfea 8px,#c3e9f0 8px,#c3e9f0 14px,#d1f3f7 14px)"></div>
<div class="a" style="left:28px;top:346px;width:806px;height:1px;background:#ede5d6"></div>
<div class="a" style="left:12px;top:326px;width:15px;height:20px;background:linear-gradient(#fdfcfa 0,#fdfcfa 1px,#f2f1ec 1px,#f2f1ec 4px,#efece3 4px,#efece3 9px,#ebe5d9 9px,#ebe5d9 19px,#fdfcfa 19px);box-shadow:inset 1px 0 0 #fdfcfa,inset -1px 0 0 #fdfcfa"></div>
<div class="a" style="left:104px;top:326px;width:1px;height:21px;background:#ede5d6"></div>
<div class="a" style="left:188px;top:326px;width:1px;height:21px;background:#ede5d6"></div>
<div class="a" style="left:300px;top:326px;width:1px;height:21px;background:#ede5d6"></div>
<div class="a" style="left:419px;top:326px;width:1px;height:21px;background:#ede5d6"></div>
<div class="a" style="left:530px;top:326px;width:1px;height:21px;background:#ede5d6"></div>
<div class="a" style="left:620px;top:326px;width:1px;height:21px;background:#ede5d6"></div>
<div class="a" style="left:715px;top:326px;width:1px;height:21px;background:#ede5d6"></div>
<div class="a" style="left:834px;top:326px;width:1px;height:21px;background:#ede5d6"></div>
<div class="t" style="left:28px;top:330px;width:73px;text-align:right;color:#000">8</div>
<div class="a" style="left:140px;top:329px;width:13px;height:13px;border:1px solid #8b7464;background:#f5f3ee;box-shadow:inset 0 0 0 1px #fbfaf8"></div>
<svg class="a" style="left:140px;top:329px" width="13" height="13" viewBox="0 0 13 13"><path d="M3.1 6.5 L5.4 9.2 L10 4.2" stroke="#8b7464" stroke-width="1.6" fill="none"/></svg>
<div class="t" style="left:180px;top:330px;width:118px;text-align:right;letter-spacing:-0.1px">99,999,999.9900</div>
<div class="t" style="left:299px;top:330px;width:118px;text-align:right;letter-spacing:-0.1px">3,800.0000</div>
<div class="t" style="left:410px;top:330px;width:118px;text-align:right;letter-spacing:-0.1px">0.0000</div>
<div class="t" style="left:500px;top:330px;width:118px;text-align:right;letter-spacing:-0.1px">0.0000</div>
<div class="t" style="left:595px;top:330px;width:118px;text-align:right;letter-spacing:-0.1px">0.0000</div>
<div class="t" style="left:714px;top:330px;width:118px;text-align:right;letter-spacing:-0.1px">0.0000</div>
<div class="a" style="left:834px;top:161px;width:1px;height:18px;background:#8b7464"></div>
<div class="a" style="left:10px;top:400px;width:826px;height:20px;background:linear-gradient(#eeebe1 0,#eeebe1 1px,#f1f0ea 1px,#f1f0ea 5px,#f3f2ed 5px,#f3f2ed 12px,#f8f7f4 12px,#f8f7f4 17px,#fcfcfa 17px)"></div>
<div class="a" style="left:12px;top:401px;width:18px;height:17px;border:1px solid #bdb5ad;border-radius:2px;background:linear-gradient(#f5f4f1 0,#f2f1ed 100%);box-shadow:inset 0 0 0 1px #fdfcfa"></div>
<svg class="a" style="left:12px;top:401px" width="18" height="17" viewBox="0 0 18 17"><path d="M4 5 H5.6 V12 H4 Z M9.3 5 V12 L5.6 8.5 Z M13 5 V12 L9.3 8.5 Z" fill="#8e8e8e"/></svg>
<div class="a" style="left:32px;top:401px;width:18px;height:17px;border:1px solid #bdb5ad;border-radius:2px;background:linear-gradient(#f5f4f1 0,#f2f1ed 100%);box-shadow:inset 0 0 0 1px #fdfcfa"></div>
<svg class="a" style="left:32px;top:401px" width="18" height="17" viewBox="0 0 18 17"><path d="M8 5 V12 L4 8.5 Z M12 5 V12 L8 8.5 Z" fill="#8e8e8e"/></svg>
<div class="a" style="left:52px;top:401px;width:17px;height:17px;border:1px solid #bdb5ad;border-radius:2px;background:linear-gradient(#f5f4f1 0,#f2f1ed 100%);box-shadow:inset 0 0 0 1px #fdfcfa"></div>
<svg class="a" style="left:52px;top:401px" width="17" height="17" viewBox="0 0 17 17"><path d="M10 4.6 V12.2 L5.6 8.4 Z" fill="#8e8e8e"/></svg>
<div class="t" style="left:73px;top:404px;letter-spacing:0.08px">Record 1 of 8</div>
<div class="a" style="left:146px;top:401px;width:17px;height:17px;border:1px solid #8b7464;border-radius:2px;background:linear-gradient(#f3f2ee 0,#f3f2ee 3px,#efece3 3px,#efece3 8px,#ebe4d8 8px);box-shadow:inset 0 0 0 1px #fdfcfa"></div>
<svg class="a" style="left:146px;top:401px" width="17" height="17" viewBox="0 0 17 17"><path d="M6.6 4.6 V12.2 L11 8.4 Z" fill="#8b7464"/></svg>
<div class="a" style="left:165px;top:401px;width:17px;height:17px;border:1px solid #8b7464;border-radius:2px;background:linear-gradient(#f3f2ee 0,#f3f2ee 3px,#efece3 3px,#efece3 8px,#ebe4d8 8px);box-shadow:inset 0 0 0 1px #fdfcfa"></div>
<svg class="a" style="left:165px;top:401px" width="17" height="17" viewBox="0 0 17 17"><path d="M5 4.6 V12.2 L9 8.4 Z M9 4.6 V12.2 L13 8.4 Z" fill="#8b7464"/></svg>
<div class="a" style="left:184px;top:401px;width:17px;height:17px;border:1px solid #8b7464;border-radius:2px;background:linear-gradient(#f3f2ee 0,#f3f2ee 3px,#efece3 3px,#efece3 8px,#ebe4d8 8px);box-shadow:inset 0 0 0 1px #fdfcfa"></div>
<svg class="a" style="left:184px;top:401px" width="17" height="17" viewBox="0 0 17 17"><path d="M4 5 V12 L7.7 8.5 Z M7.7 5 V12 L11.4 8.5 Z M11.4 5 H13 V12 H11.4 Z" fill="#8b7464"/></svg>
<div class="a" style="left:203px;top:401px;width:17px;height:17px;border:1px solid #8b7464;border-radius:2px;background:linear-gradient(#f3f2ee 0,#f3f2ee 3px,#efece3 3px,#efece3 8px,#ebe4d8 8px);box-shadow:inset 0 0 0 1px #fdfcfa"></div>
<svg class="a" style="left:203px;top:401px" width="17" height="17" viewBox="0 0 17 17"><path d="M3.8 7 H7 V3.8 H9 V7 H12.3 V9 H9 V12.2 H7 V9 H3.8 Z" fill="#18981a"/></svg>
<div class="a" style="left:222px;top:401px;width:17px;height:17px;border:1px solid #8b7464;border-radius:2px;background:linear-gradient(#f3f2ee 0,#f3f2ee 3px,#efece3 3px,#efece3 8px,#ebe4d8 8px);box-shadow:inset 0 0 0 1px #fdfcfa"></div>
<svg class="a" style="left:222px;top:401px" width="17" height="17" viewBox="0 0 17 17"><rect x="4" y="7" width="9" height="2" fill="#e00000"/></svg>
<div class="a" style="left:241px;top:401px;width:17px;height:17px;border:1px solid #8b7464;border-radius:2px;background:linear-gradient(#f3f2ee 0,#f3f2ee 3px,#efece3 3px,#efece3 8px,#ebe4d8 8px);box-shadow:inset 0 0 0 1px #fdfcfa"></div>
<svg class="a" style="left:241px;top:401px" width="17" height="17" viewBox="0 0 17 17"><path d="M5 10.5 L8.5 6 L12 10.5 Z" fill="#8b7464"/></svg>
<div class="a" style="left:260px;top:401px;width:17px;height:17px;border:1px solid #bdb5ad;border-radius:2px;background:linear-gradient(#f5f4f1 0,#f2f1ed 100%);box-shadow:inset 0 0 0 1px #fdfcfa"></div>
<svg class="a" style="left:260px;top:401px" width="17" height="17" viewBox="0 0 17 17"><path d="M4 8 L7 11 L12.5 5.5" stroke="#8e8e8e" stroke-width="2.2" fill="none"/></svg>
<div class="a" style="left:279px;top:401px;width:17px;height:17px;border:1px solid #bdb5ad;border-radius:2px;background:linear-gradient(#f5f4f1 0,#f2f1ed 100%);box-shadow:inset 0 0 0 1px #fdfcfa"></div>
<svg class="a" style="left:279px;top:401px" width="17" height="17" viewBox="0 0 17 17"><path d="M4.5 4.5 L12.5 12.5 M12.5 4.5 L4.5 12.5" stroke="#8e8e8e" stroke-width="2.2" fill="none"/></svg>
<div class="a" style="left:314px;top:400px;width:504px;height:19px;background:linear-gradient(#eeebe1 0,#eeebe1 1px,#f1f0ea 1px,#f1f0ea 5px,#f3f2ed 5px,#f3f2ed 12px,#f8f7f4 12px,#f8f7f4 17px,#fcfcfa 17px)"></div>
<div class="a" style="left:297px;top:400px;width:17px;height:19px;border:1px solid #bdb5ad;border-radius:2px;background:linear-gradient(#fdfcfa 0,#fdfcfa 1px,#f4f3ef 1px,#f0efea 100%)"></div>
<svg class="a" style="left:297px;top:400px" width="17" height="19" viewBox="0 0 17 19"><path d="M10.5 6 L7 9.5 L10.5 13" stroke="#a9a39b" stroke-width="1.3" fill="none"/></svg>
<div class="a" style="left:818px;top:400px;width:17px;height:19px;border:1px solid #bdb5ad;border-radius:2px;background:linear-gradient(#fdfcfa 0,#fdfcfa 1px,#f4f3ef 1px,#f0efea 100%)"></div>
<svg class="a" style="left:818px;top:400px" width="17" height="19" viewBox="0 0 17 19"><path d="M6.5 6 L10 9.5 L6.5 13" stroke="#a9a39b" stroke-width="1.3" fill="none"/></svg>
</body></html>
